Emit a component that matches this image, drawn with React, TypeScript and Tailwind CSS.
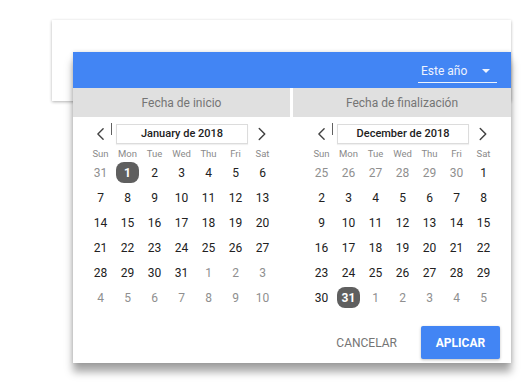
import { ChevronLeft, ChevronRight } from 'lucide-react'

type Day = { n: number; muted?: boolean; selected?: boolean }

const WEEK = ['Sun', 'Mon', 'Tue', 'Wed', 'Thu', 'Fri', 'Sat']

function build(lead: number[], count: number, trail: number, selected: number): Day[] {
  const days: Day[] = lead.map((n) => ({ n, muted: true }))
  for (let i = 1; i <= count; i++) days.push({ n: i, selected: i === selected })
  for (let i = 1; i <= trail; i++) days.push({ n: i, muted: true })
  return days
}

const january = build([31], 31, 10, 1)
const december = build([25, 26, 27, 28, 29, 30], 31, 5, 31)

function Calendar({ label, days, pad }: { label: string; days: Day[]; pad: string }) {
  return (
    <div className={`flex flex-col pt-[7px] ${pad}`}>
      <div className="flex items-center h-[20px]">
        <div className="w-[24px] flex justify-center pl-[3px] text-[#424242]">
          <ChevronLeft size={22} strokeWidth={1.6} />
        </div>
        <div className="w-px h-[12px] bg-[#616161] self-start mt-[-1px]" />
        <div className="ml-[4px] w-[132px] h-[20px] flex items-center justify-center border border-[#dcdcdc] shadow-[0_1px_1px_rgba(0,0,0,0.06)] text-[11px] font-medium text-[#212121]">
          {label}
        </div>
        <div className="w-[27px] flex justify-center text-[#424242]">
          <ChevronRight size={22} strokeWidth={1.6} />
        </div>
      </div>
      <div className="grid grid-cols-[repeat(7,27px)] mt-[3px] h-[13px] items-center">
        {WEEK.map((w) => (
          <div key={w} className="text-center text-[9.5px] leading-none text-[#8a8a8a]">
            {w}
          </div>
        ))}
      </div>
      <div className="grid grid-cols-[repeat(7,27px)] auto-rows-[25px]">
        {days.map((d, i) => (
          <div key={i} className="flex items-center justify-center">
            {d.selected ? (
              <span className="w-[23px] h-[21px] rounded-[8px] bg-[#5f5f5f] text-white font-bold text-[12px] flex items-center justify-center">
                {d.n}
              </span>
            ) : (
              <span className={`text-[12px] ${d.muted ? 'text-[#8f8f8f]' : 'text-[#212121]'}`}>{d.n}</span>
            )}
          </div>
        ))}
      </div>
    </div>
  )
}

export default function App() {
  return (
    <div className="relative w-[530px] h-[383px] bg-white overflow-hidden font-['Roboto',sans-serif]">
      <div className="absolute left-[52px] top-[20px] w-[459px] h-[81px] bg-white shadow-[0_1px_3px_rgba(0,0,0,0.3)]" />

      <div className="absolute left-[73px] top-[52px] w-[438px] h-[311px] bg-white flex flex-col shadow-[0_9px_8px_rgba(0,0,0,0.35),0_0_4px_rgba(0,0,0,0.15)]">
        <div className="h-[36px] bg-[#4285f4] flex items-start justify-end pr-[14px]">
          <div className="mt-[7px] w-[79px] h-[24px] border-b border-white/90 flex items-center justify-between pl-[3px] pr-[7px]">
            <span className="text-[12px] text-[#eef3fe]">Este año</span>
            <span className="w-0 h-0 border-l-[4px] border-r-[4px] border-t-[4px] border-l-transparent border-r-transparent border-t-[#eef3fe]" />
          </div>
        </div>

        <div className="flex gap-[3px] h-[29px]">
          <div className="w-[217px] bg-[#e0e0e0] flex items-center justify-center text-[12px] text-[#757575]">
            Fecha de inicio
          </div>
          <div className="flex-1 bg-[#e0e0e0] flex items-center justify-center text-[12px] text-[#757575]">
            Fecha de finalización
          </div>
        </div>

        <div className="flex">
          <div className="w-[220px]">
            <Calendar label="January de 2018" days={january} pad="pl-[14px]" />
          </div>
          <div className="flex-1">
            <Calendar label="December de 2018" days={december} pad="pl-[15px]" />
          </div>
        </div>

        <div className="flex-1 flex items-end justify-end gap-[24px] pr-[11px] pb-[4px]">
          <span className="h-[33px] flex items-center text-[12px] text-[#757575]">CANCELAR</span>
          <button className="w-[79px] h-[33px] rounded-[2px] bg-[#4285f4] text-white text-[12px] font-bold shadow-[0_1px_3px_rgba(0,0,0,0.25)]">
            APLICAR
          </button>
        </div>
      </div>
    </div>
  )
}
